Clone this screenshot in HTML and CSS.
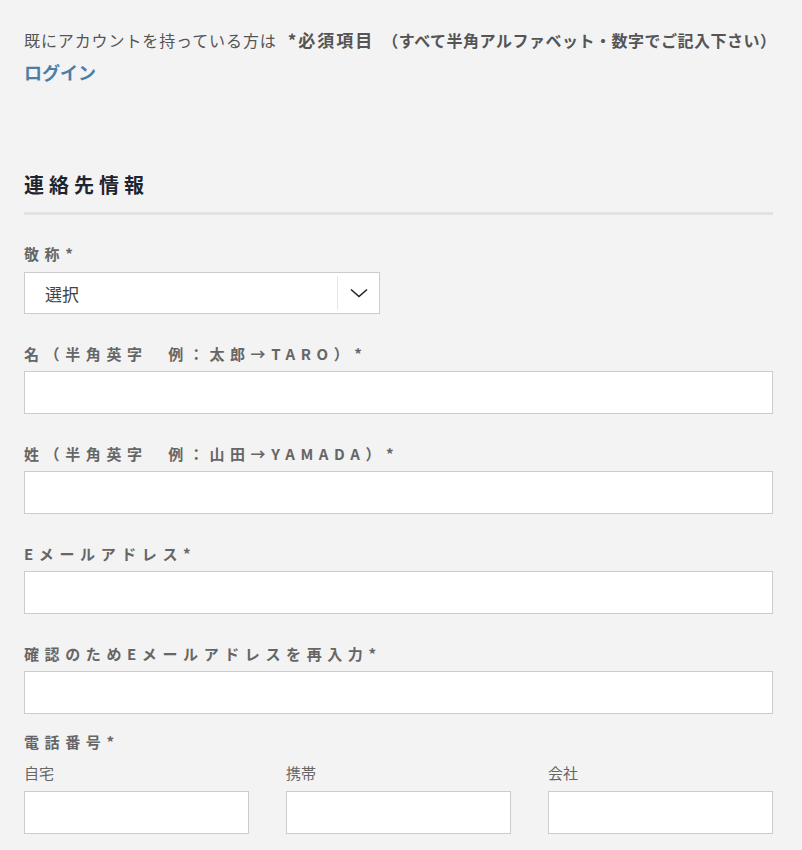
FILE: index.html
```html
<!DOCTYPE html>
<html lang="ja">
<head>
  <meta charset="UTF-8">
  <meta name="viewport" content="width=device-width, initial-scale=1.0">
  <title>会員登録</title>
  <link rel="stylesheet" href="styles.css">
</head>
<body>
<div class="container">
  <div class="intro">
    <p class="intro-text">既にアカウントを持っている方は<strong class="required">*必須項目</strong><strong class="note">（すべて半角アルファベット・数字でご記入下さい）</strong></p>
    <a class="login-link" href="#">ログイン</a>
  </div>

  <h2 class="section-title">連絡先情報</h2>

  <div class="field field-select">
    <label>敬称*</label>
    <div class="select-box">
      <span class="select-value">選択</span>
      <span class="select-arrow">
        <svg width="18" height="10" viewBox="0 0 18 10"><path d="M1 1.5 L9 8.5 L17 1.5" fill="none" stroke="#222" stroke-width="1.6"/></svg>
      </span>
    </div>
  </div>

  <div class="field">
    <label>名（半角英字　例：太郎→TARO）*</label>
    <input type="text">
  </div>

  <div class="field">
    <label>姓（半角英字　例：山田→YAMADA）*</label>
    <input type="text">
  </div>

  <div class="field">
    <label>Eメールアドレス*</label>
    <input type="text">
  </div>

  <div class="field field-last">
    <label>確認のためEメールアドレスを再入力*</label>
    <input type="text">
  </div>

  <div class="field phone">
    <label>電話番号*</label>
    <div class="phone-row">
      <div class="phone-col">
        <span class="sub-label">自宅</span>
        <input type="text">
      </div>
      <div class="phone-col">
        <span class="sub-label">携帯</span>
        <input type="text">
      </div>
      <div class="phone-col">
        <span class="sub-label">会社</span>
        <input type="text">
      </div>
    </div>
  </div>
</div>
</body>
</html>
```

FILE: styles.css
```css
body {
  font-family: "Noto Sans CJK JP", "Noto Sans", sans-serif;
  background: #f3f3f3;
  color: #555;
  margin: 0;
  padding: 0;
}
.container {
  width: 749px;
  padding: 0 24px;
}
.intro {
  padding-top: 28px;
}
.intro-text {
  margin: 0;
  font-size: 16px;
  line-height: 24px;
  letter-spacing: 0.9px;
  color: #555;
  white-space: nowrap;
}
.intro-text strong {
  font-weight: bold;
  letter-spacing: 0.5px;
}
.intro-text .required {
  margin-left: 11px;
  font-size: 17px;
  letter-spacing: 2px;
}
.note {
  margin-left: 8px;
}
.login-link {
  display: inline-block;
  margin-top: 8px;
  font-size: 18px;
  line-height: 24px;
  font-weight: bold;
  color: #4a7ea8;
  text-decoration: none;
}
.section-title {
  margin: 86px 0 0;
  padding-bottom: 13px;
  font-size: 20px;
  line-height: 28px;
  letter-spacing: 5px;
  font-weight: bold;
  color: #1f2530;
  border-bottom: 3px solid #e2e2e2;
}
.field {
  margin-bottom: 30px;
}
.field label {
  display: block;
  font-size: 15px;
  line-height: 20px;
  font-weight: bold;
  letter-spacing: 5.6px;
  color: #666;
  margin-bottom: 7px;
}
.field-select {
  margin-top: 29px;
}
.field-select label {
  margin-bottom: 8px;
}
.select-box {
  display: flex;
  align-items: center;
  width: 354px;
  height: 40px;
  background: white;
  border: 1px solid #ccc;
}
.select-value {
  flex: 1;
  padding-left: 20px;
  font-size: 17px;
  color: #444;
}
.select-arrow {
  display: flex;
  align-items: center;
  justify-content: center;
  width: 41px;
  height: 34px;
  border-left: 1px solid #e6e6e6;
}
input[type="text"] {
  display: block;
  box-sizing: border-box;
  width: 100%;
  height: 43px;
  margin: 0;
  background: white;
  border: 1px solid #ccc;
  border-radius: 0;
}
.field-last {
  margin-bottom: 18px;
}
.phone label {
  margin-bottom: 11px;
}
.phone-row {
  display: grid;
  grid-template-columns: 1fr 1fr 1fr;
  gap: 37px;
}
.sub-label {
  display: block;
  font-size: 15px;
  line-height: 20px;
  color: #666;
  margin-bottom: 8px;
}
```
